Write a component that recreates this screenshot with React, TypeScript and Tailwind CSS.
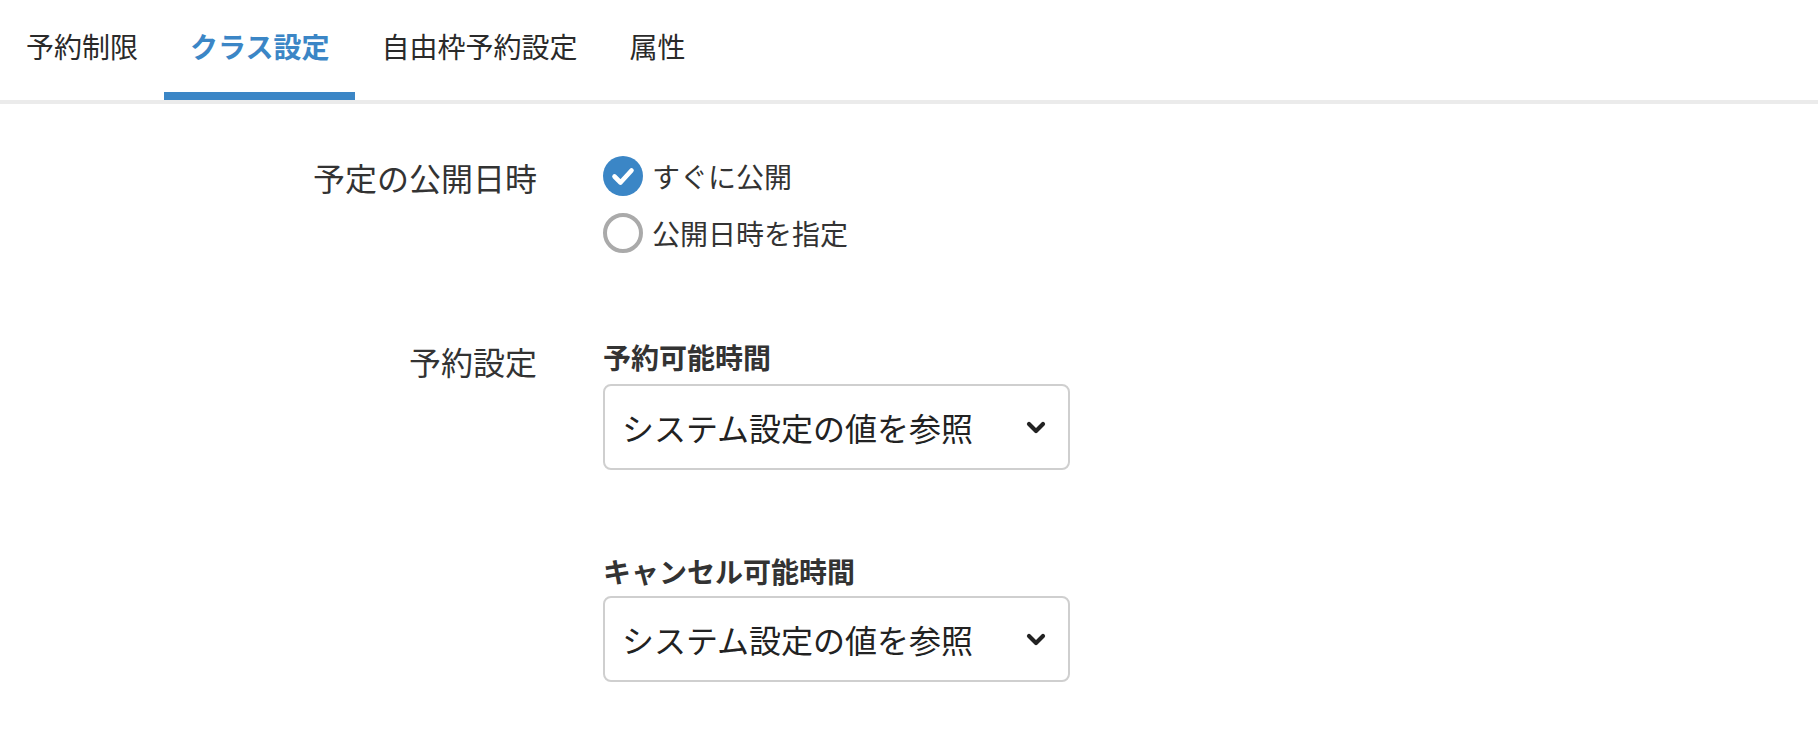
import React from "react";

const FONT = "font-['Noto_Sans_CJK_JP','Noto_Sans',sans-serif]";

const tabs = ["予約制限", "クラス設定", "自由枠予約設定", "属性"];

const Chevron = () => (
  <svg width="20" height="13" viewBox="0 0 20 13" fill="none">
    <path d="M3 3 L10 10 L17 3" stroke="#222" strokeWidth="4.2" strokeLinecap="round" strokeLinejoin="round" />
  </svg>
);

const SelectBox: React.FC<{ value: string }> = ({ value }) => (
  <div className="flex h-[86px] w-[467px] items-center justify-between rounded-[8px] border-2 border-[#cfcfcf] bg-white pl-[17px] pr-[22px]">
    <span className="text-[32px] leading-none text-[#222]">{value}</span>
    <Chevron />
  </div>
);

const Radio: React.FC<{ checked?: boolean; label: string }> = ({ checked, label }) => (
  <label className="flex h-[40px] items-center gap-[9px]">
    {checked ? (
      <svg width="40" height="40" viewBox="0 0 40 40">
        <circle cx="20" cy="20" r="20" fill="#3b86c6" />
        <path d="M11.5 20.5 L17.5 26.5 L28.5 14.5" stroke="#fff" strokeWidth="4.6" fill="none" strokeLinecap="round" strokeLinejoin="round" />
      </svg>
    ) : (
      <span className="h-[40px] w-[40px] rounded-full border-4 border-[#aaaaaa] bg-white" />
    )}
    <span className="text-[28px] leading-none text-[#333]">{label}</span>
  </label>
);

export default function App() {
  return (
    <div className={`min-h-screen bg-white ${FONT}`}>
      {/* tabs */}
      <nav className="flex border-b-4 border-[#ebebeb]">
        {tabs.map((t, i) => {
          const active = i === 1;
          return (
            <div
              key={t}
              className={`flex h-[100px] items-center px-[26px] border-b-8 text-[28px] leading-none ${
                active ? "border-[#3b86c6] font-bold text-[#3b86c6]" : "border-transparent text-[#2a2a2a]"
              }`}
            >
              {t}
            </div>
          );
        })}
      </nav>

      <div className="pt-[49px]">
        {/* 予定の公開日時 */}
        <div className="flex">
          <div className="w-[537px] text-right text-[32px] leading-[48px] text-[#333]">予定の公開日時</div>
          <div className="ml-[66px] mt-[3px] flex flex-col gap-[17px]">
            <Radio checked label="すぐに公開" />
            <Radio label="公開日時を指定" />
          </div>
        </div>

        {/* 予約設定 */}
        <div className="mt-[84px] flex">
          <div className="w-[537px] text-right text-[32px] leading-[48px] text-[#333]">予約設定</div>
          <div className="ml-[66px] flex flex-col">
            <div className="text-[28px] font-bold leading-[40px] text-[#333]">予約可能時間</div>
            <div className="mt-[7px]">
              <SelectBox value="システム設定の値を参照" />
            </div>
            <div className="mt-[81px] text-[28px] font-bold leading-[40px] text-[#333]">キャンセル可能時間</div>
            <div className="mt-[5px]">
              <SelectBox value="システム設定の値を参照" />
            </div>
          </div>
        </div>
      </div>
    </div>
  );
}
